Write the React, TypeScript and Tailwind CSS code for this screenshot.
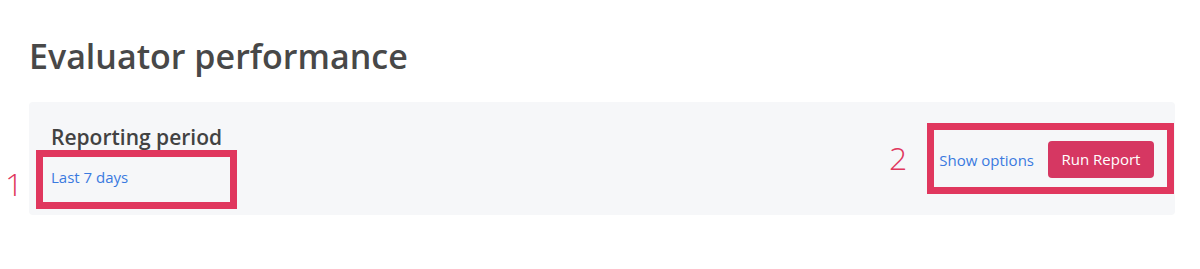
import React from "react";

// Evaluator performance — reporting panel with annotation boxes
export default function App() {
  return (
    <div
      className="relative h-[269px] w-[1200px] bg-white pl-[29px] pr-[25px] pt-[36px]"
      style={{ fontFamily: '"Open Sans", "Liberation Sans", sans-serif' }}
    >
      <h1 className="text-[34px] font-semibold leading-[40px] text-[#484848]">
        Evaluator performance
      </h1>

      {/* Panel */}
      <div className="mt-[26px] flex h-[113px] items-start justify-between rounded-[4px] bg-[#f6f7f9] pl-[22px] pr-[21px] pt-[21px]">
        <div className="flex flex-col">
          <span className="text-[21px] font-semibold leading-[28px] text-[#424242]">
            Reporting period
          </span>
          <a className="mt-[16px] text-[15px] leading-[20px] text-[#3a7ae0]">Last 7 days</a>
        </div>
        <div className="mt-[18px] flex items-center gap-[14px]">
          <a className="text-[15px] leading-[20px] text-[#3a7ae0]">Show options</a>
          <button className="h-[37px] w-[106px] rounded-[4px] bg-[#d63762] text-[15px] text-white">
            Run Report
          </button>
        </div>
      </div>

      {/* Annotations */}
      <div className="absolute left-[36px] top-[150px] h-[59px] w-[201px] border-[7px] border-[#e0375e]" />
      <div className="absolute left-[927px] top-[123px] h-[71px] w-[247px] border-[7px] border-[#e0375e]" />
      <span className="absolute left-[5px] top-[164px] text-[32px] font-light leading-[40px] text-[#e0375e]">
        1
      </span>
      <span className="absolute left-[889px] top-[138px] text-[32px] font-light leading-[40px] text-[#e0375e]">
        2
      </span>
    </div>
  );
}
